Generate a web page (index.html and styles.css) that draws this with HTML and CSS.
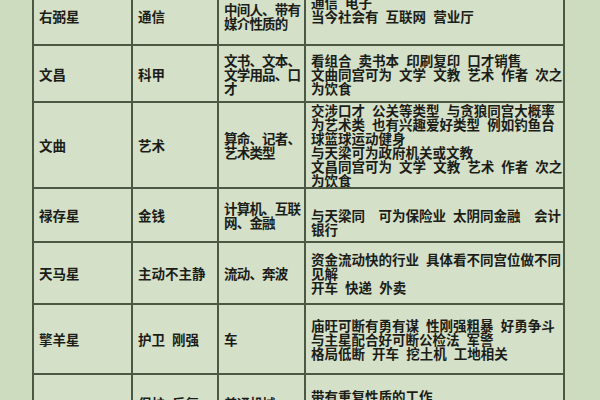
FILE: index.html
```html
<!DOCTYPE html>
<html lang="zh-CN">
<head>
<meta charset="utf-8">
<title>星曜行业表</title>
<link rel="stylesheet" href="styles.css">
</head>
<body>
<div class="page">
  <table class="stars">
    <colgroup>
      <col class="c1"><col class="c2"><col class="c3"><col class="c4">
    </colgroup>
    <tbody>
      <tr class="r1">
        <td>右弼星</td>
        <td>通信</td>
        <td class="kind">中间人、带有<br>媒介性质的</td>
        <td class="desc">通信 电子<br>当今社会有 互联网 营业厅<br>&nbsp;</td>
      </tr>
      <tr class="r2">
        <td>文昌</td>
        <td>科甲</td>
        <td class="kind">文书、文本、<br>文学用品、口<br>才</td>
        <td class="desc">看组合 卖书本 印刷复印 口才销售<br>文曲同宫可为 文学 文教 艺术 作者 次之<br>为饮食</td>
      </tr>
      <tr class="r3">
        <td>文曲</td>
        <td>艺术</td>
        <td class="kind">算命、记者、<br>艺术类型</td>
        <td class="desc">交涉口才 公关等类型 与贪狼同宫大概率<br>为艺术类 也有兴趣爱好类型 例如钓鱼台<br>球篮球运动健身<br>与天梁可为政府机关或文教<br>文昌同宫可为 文学 文教 艺术 作者 次之<br>为饮食</td>
      </tr>
      <tr class="r4">
        <td>禄存星</td>
        <td>金钱</td>
        <td class="kind">计算机、互联<br>网、金融</td>
        <td class="desc">&nbsp;<br>与天梁同　可为保险业 太阴同金融　会计<br>银行</td>
      </tr>
      <tr class="r5">
        <td>天马星</td>
        <td>主动不主静</td>
        <td class="kind">流动、奔波</td>
        <td class="desc">资金流动快的行业 具体看不同宫位做不同<br>见解<br>开车 快递 外卖</td>
      </tr>
      <tr class="r6">
        <td>擎羊星</td>
        <td>护卫 刚强</td>
        <td class="kind">车</td>
        <td class="desc">庙旺可断有勇有谋 性刚强粗暴 好勇争斗<br>与主星配合好可断公检法 军警<br>格局低断 开车 挖土机 工地相关</td>
      </tr>
      <tr class="r7">
        <td>陀罗星</td>
        <td>保护 反复<br>拖延</td>
        <td class="kind">普通机械<br>工具</td>
        <td class="desc">带有重复性质的工作<br>格局低被动 工人类型<br>&nbsp;</td>
      </tr>
    </tbody>
  </table>
</div>
</body>
</html>
```

FILE: styles.css
```css
html, body {
  margin: 0;
  padding: 0;
  background: #cddcbf;
}

body {
  width: 600px;
  height: 400px;
  overflow: hidden;
  font-family: "Noto Sans CJK SC", "Noto Sans", sans-serif;
  font-weight: 700;
  font-size: 13.5px;
  line-height: 14px;
  word-spacing: 4px;
  color: #1b1d18;
}

.page {
  padding-left: 32px;
}

.stars {
  margin-top: -14px;
  width: 531px;
  table-layout: fixed;
  border-collapse: collapse;
  background: #d5e0c8;
}

.c1 { width: 99px; }
.c2 { width: 86px; }
.c3 { width: 87px; }
.c4 { width: 259px; }

.stars td {
  border: 2px solid #4b5843;
  padding: 0 0 0 5px;
  vertical-align: middle;
  white-space: nowrap;
  overflow: hidden;
}

.stars td.kind {
  letter-spacing: -0.8px;
}

.r1 { height: 58px; }
.r2 { height: 57px; }
.r3 { height: 80px; }
.r4 { height: 54px; }
.r5 { height: 62px; }
.r6 { height: 70px; }
.r7 { height: 72px; }
```
